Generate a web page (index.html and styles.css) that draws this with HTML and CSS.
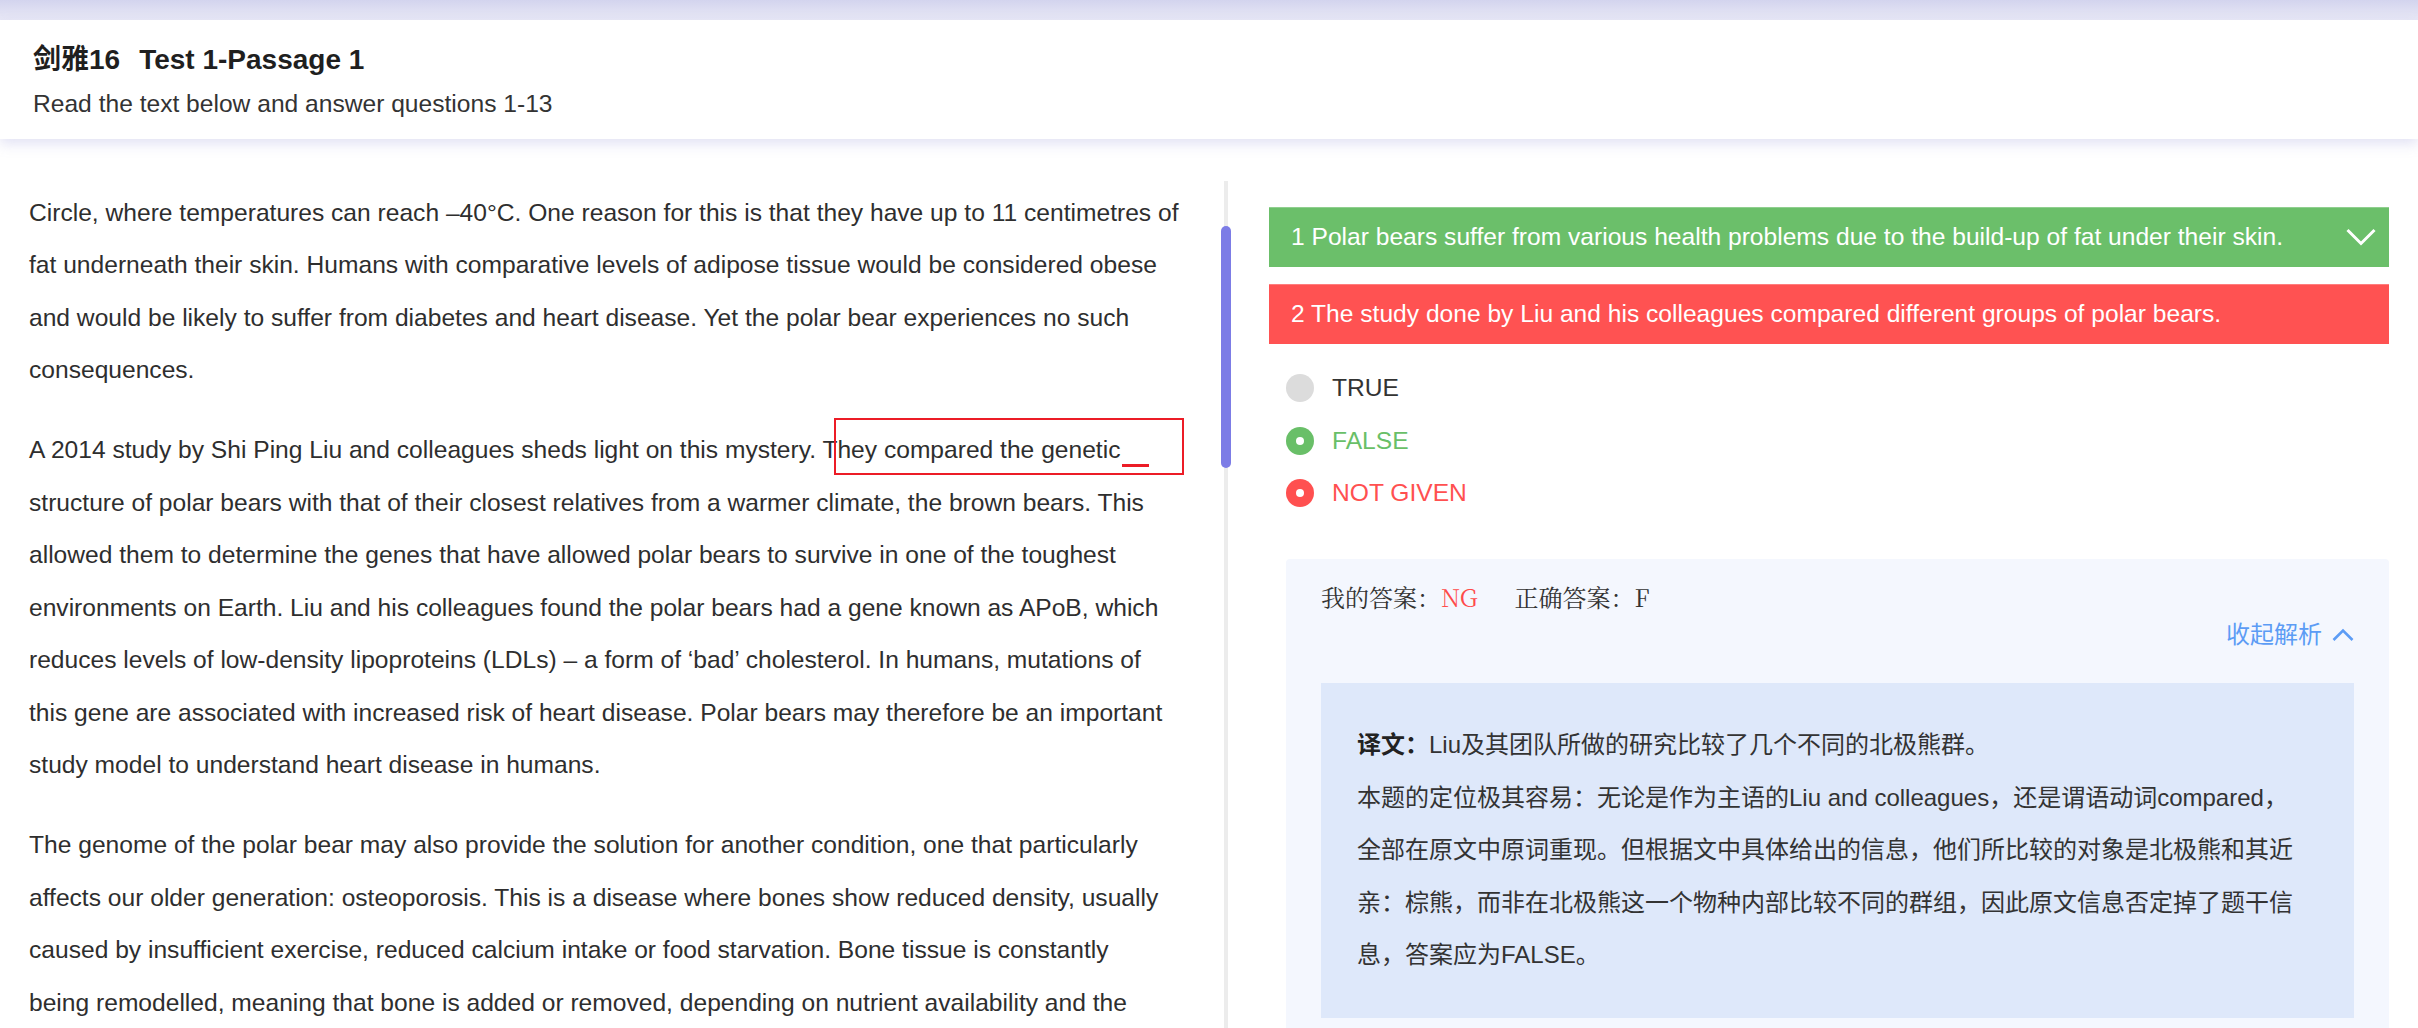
FILE: index.html
```html
<!DOCTYPE html>
<html lang="zh-CN">
<head>
<meta charset="utf-8">
<title>剑雅16 Test 1-Passage 1</title>
<link rel="stylesheet" href="styles.css">
</head>
<body>
<div class="topbar"></div>
<header class="header">
  <h1 class="title"><span class="title-cn">剑雅16</span>Test 1-Passage 1</h1>
  <p class="subtitle">Read the text below and answer questions 1-13</p>
</header>
<main class="main">
  <section class="left">
    <div class="passage">
      <p>Circle, where temperatures can reach –40°C. One reason for this is that they have up to 11 centimetres of fat underneath their skin. Humans with comparative levels of adipose tissue would be considered obese and would be likely to suffer from diabetes and heart disease. Yet the polar bear experiences no such consequences.</p>
      <p>A 2014 study by Shi Ping Liu and colleagues sheds light on this mystery. They compared the genetic structure of polar bears with that of their closest relatives from a warmer climate, the brown bears. This allowed them to determine the genes that have allowed polar bears to survive in one of the toughest environments on Earth. Liu and his colleagues found the polar bears had a gene known as APoB, which reduces levels of low-density lipoproteins (LDLs) – a form of ‘bad’ cholesterol. In humans, mutations of this gene are associated with increased risk of heart disease. Polar bears may therefore be an important study model to understand heart disease in humans.</p>
      <p>The genome of the polar bear may also provide the solution for another condition, one that particularly affects our older generation: osteoporosis. This is a disease where bones show reduced density, usually caused by insufficient exercise, reduced calcium intake or food starvation. Bone tissue is constantly<br>being remodelled, meaning that bone is added or removed, depending on nutrient availability and the</p>
    </div>
    <div class="scrollbar"><div class="thumb"></div></div>
    <div class="mark-box"></div>
    <div class="mark-line"></div>
  </section>
  <section class="right">
    <div class="q q-correct">
      <span>1 Polar bears suffer from various health problems due to the build-up of fat under their skin.</span>
      <svg class="chev" width="30" height="18" viewBox="0 0 30 18"><path d="M1.5 2 L15 15.5 L28.5 2" fill="none" stroke="#fff" stroke-width="3"/></svg>
    </div>
    <div class="q q-wrong">
      <span>2 The study done by Liu and his colleagues compared different groups of polar bears.</span>
    </div>
    <ul class="options">
      <li class="opt"><span class="radio"></span>TRUE</li>
      <li class="opt opt-right"><span class="radio"><span class="dot"></span></span>FALSE</li>
      <li class="opt opt-wrong"><span class="radio"><span class="dot"></span></span>NOT GIVEN</li>
    </ul>
    <div class="analysis">
      <div class="answers">我的答案：<span class="ng">NG</span><span class="correct-label">正确答案：F</span></div>
      <div class="toggle">收起解析<svg width="22" height="14" viewBox="0 0 22 14"><path d="M1.5 12 L11 2.5 L20.5 12" fill="none" stroke="#5c9cf5" stroke-width="2.6"/></svg></div>
      <div class="explain">
        <p><b>译文：</b>Liu及其团队所做的研究比较了几个不同的北极熊群。</p>
        <p>本题的定位极其容易：无论是作为主语的Liu and colleagues，还是谓语动词compared，全部在原文中原词重现。但根据文中具体给出的信息，他们所比较的对象是北极熊和其近亲：棕熊，而非在北极熊这一个物种内部比较不同的群组，因此原文信息否定掉了题干信息，答案应为FALSE。</p>
      </div>
    </div>
  </section>
</main>
</body>
</html>
```
FILE: styles.css
```css
html, body {
  margin: 0;
  padding: 0;
  background: #fff;
}
body {
  font-family: "Liberation Sans", "Noto Sans CJK SC", sans-serif;
  color: #333;
  width: 2418px;
  height: 1028px;
  overflow: hidden;
}
.topbar {
  height: 20px;
  background: linear-gradient(#d3d4ee, #e9e9f6);
}
.header {
  position: relative;
  z-index: 2;
  box-sizing: border-box;
  height: 119px;
  padding: 20px 0 0 33px;
  background: #fff;
  box-shadow: 0 5px 12px rgba(150, 150, 215, 0.28);
}
.title {
  margin: 0;
  font-size: 28px;
  line-height: 40px;
  font-weight: bold;
  color: #1f1f1f;
}
.title-cn {
  margin-right: 19px;
}
.subtitle {
  margin: 8px 0 0;
  font-size: 24.6px;
  line-height: 32px;
  color: #333;
}
.main {
  display: flex;
  height: 889px;
  overflow: hidden;
}
.left {
  position: relative;
  display: flex;
  width: 1231px;
  flex: none;
}
.passage {
  flex: none;
  width: 1153px;
  padding: 47.5px 0 0 29px;
  font-size: 24.6px;
  line-height: 52.5px;
  color: #2e2e2e;
}
.passage p {
  margin: 0 0 27.5px;
}
.scrollbar {
  flex: none;
  width: 10px;
  margin: 42px 0 0 39px;
  background: linear-gradient(to right, transparent 3px, #ececec 3px, #ececec 7px, transparent 7px);
}
.thumb {
  margin-top: 45px;
  height: 242px;
  border-radius: 5px;
  background: #7c7ce6;
}
.mark-box {
  position: absolute;
  left: 834px;
  top: 279px;
  width: 350px;
  height: 57px;
  box-sizing: border-box;
  border: 2px solid #ec1c26;
}
.mark-line {
  position: absolute;
  left: 1122px;
  top: 325px;
  width: 27px;
  height: 3px;
  background: #ec1c26;
}
.right {
  flex: 1;
  padding: 68px 29px 0 38px;
}
.q {
  display: flex;
  align-items: center;
  justify-content: space-between;
  height: 60px;
  padding: 0 13px 0 22px;
  color: #fff;
  font-size: 24.6px;
  box-shadow: inset 0 1px 0 rgba(255, 255, 255, 0.25);
}
.q-correct {
  background: #6bbf6a;
}
.q-wrong {
  margin-top: 17px;
  background: #ff5252;
}
.chev {
  display: block;
}
.options {
  list-style: none;
  margin: 18px 0 0;
  padding: 0 0 0 17px;
}
.opt {
  display: flex;
  align-items: center;
  gap: 18px;
  height: 52.5px;
  font-size: 24.6px;
  color: #333;
}
.radio {
  display: flex;
  align-items: center;
  justify-content: center;
  width: 28px;
  height: 28px;
  border-radius: 50%;
  background: #dcdcdc;
}
.dot {
  width: 8px;
  height: 8px;
  border-radius: 50%;
  background: #fff;
}
.opt-right { color: #69bf68; }
.opt-right .radio { background: #69bf68; }
.opt-wrong { color: #ff5050; }
.opt-wrong .radio { background: #ff5050; }
.analysis {
  margin: 39.75px 0 0 17px;
  padding: 20px 35px 35px;
  background: #f4f7fe;
  border-radius: 4px 4px 0 0;
}
.answers {
  font-family: "Noto Serif CJK SC", "Liberation Serif", "Noto Sans CJK SC", serif;
  font-size: 24px;
  line-height: 36px;
  color: #333;
}
.ng {
  color: #ff4a4a;
}
.correct-label {
  margin-left: 37px;
}
.toggle {
  display: flex;
  justify-content: flex-end;
  align-items: center;
  gap: 10px;
  margin-top: 2px;
  font-size: 24px;
  line-height: 36px;
  color: #5c9cf5;
}
.toggle svg {
  display: block;
}
.explain {
  margin-top: 30px;
  padding: 36px 50px 36px 36px;
  background: #dee8fa;
  font-size: 24px;
  line-height: 52.5px;
  color: #333;
}
.explain p {
  margin: 0;
}
.explain b {
  font-weight: bold;
  color: #222;
}
```
